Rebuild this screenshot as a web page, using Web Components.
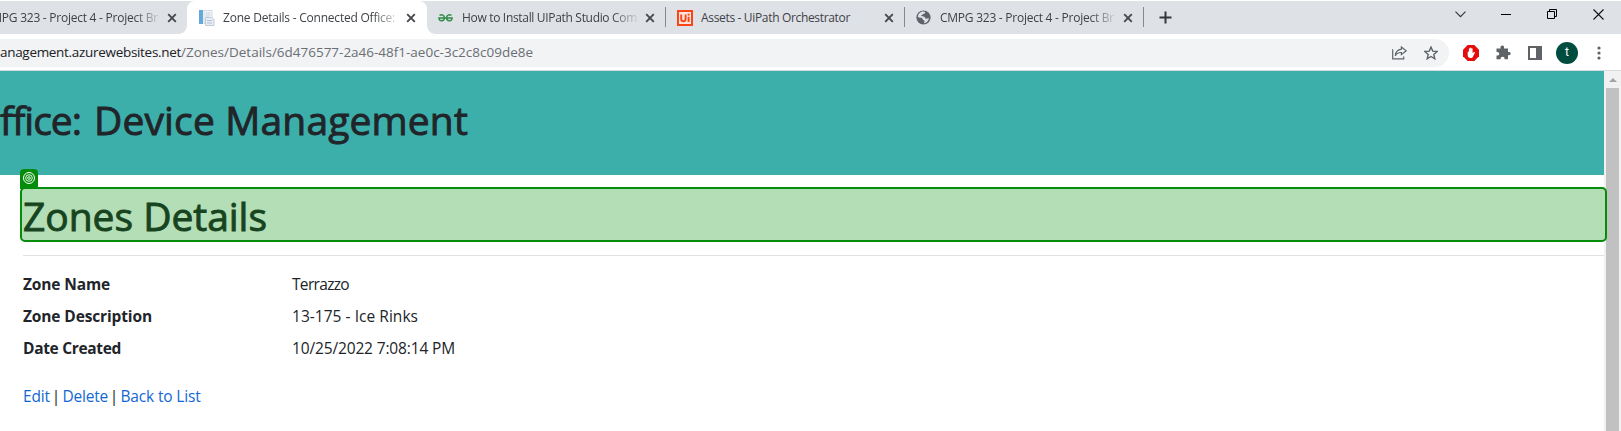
<!DOCTYPE html>
<html lang="en"><head><meta charset="utf-8"><title>Zone Details - Connected Office: Device Management</title>
<style>
body{margin:0;width:1621px;height:431px;overflow:hidden;background:#fff;font-family:"Open Sans","Noto Sans",sans-serif}
</style></head><body>
<browser-window></browser-window>
<script>
const define=(name,html,init)=>customElements.define(name,class extends HTMLElement{
  constructor(){super();this.attachShadow({mode:'open'}).innerHTML=html}
  connectedCallback(){if(init)init(this)}
});

/* Text run whose tracking is adjusted to fill a given width */
define('fit-text',`<style>:host{display:block;white-space:pre;flex:none}span{display:inline-block}</style><span><slot></slot></span>`,el=>{
  const s=el.shadowRoot.querySelector('span'),w=+el.getAttribute('w');
  el.style.width=w+'px';
  const n=el.textContent.length;
  s.style.letterSpacing=((w-s.getBoundingClientRect().width)/n)+'px';
});

define('ui-icon',`<style>:host{display:block;flex:none;line-height:0}svg{display:block}</style><div></div>`,el=>{
  const I={
  close:[10,10,'<path d="M1.2 1.2 8.8 8.8M8.8 1.2 1.2 8.8" stroke="#45484c" stroke-width="1.9"/>'],
  page:[16,16,'<rect x="5" y=".5" width="8" height="13" fill="#f5f8fb" stroke="#d3dae3"/><rect x="0" y="0" width="4" height="14" fill="#62a9dc"/><path d="M6.5 3h5M6.5 5h5M6.5 7h4" stroke="#c3cddb"/><path d="M6.5 7.5h6l2.5 2v6H6.500z" fill="#e9eef5" stroke="#c0cad8"/><path d="M8 10.500h5M8 13h5" stroke="#b4c1d6"/>'],
  geeks:[15,10,'<g fill="none" stroke="#2f8d46" stroke-width="1.5"><path d="M1.500 2.400C4 1.200 6.400 2.100 6.400 4.500M.2 4.900H14.800M6.400 5C6.200 8.500 1.500 8.900 1 5.500M13.500 2.400C11 1.200 8.600 2.100 8.600 4.500M8.600 5C8.800 8.500 13.500 8.900 14 5.500"/></g>'],
  uipath:[16,16,'<rect x="1" y="1" width="14" height="14" fill="#fce3dd" stroke="#fa4616" stroke-width="2"/><path d="M4.200 4.500V9c0 3 4.400 3 4.400 0V4.500M11.600 6.800V12" fill="none" stroke="#fa4616" stroke-width="1.900"/><circle cx="11.600" cy="4.600" r="1.100" fill="#fa4616"/>'],
  globe:[15,15,'<circle cx="7.500" cy="7.500" r="7.100" fill="#5f6368"/><path d="M9.300 1.900c.2 1.700-1 1.800-2.300 2-.5 1.200-1.500 1-2 1.700.3 1.200 2.500.7 3.600 1.300.9.600.5 1.500 1.400 1.900 1.200.1 1.600-.8 2.900-.6-.2 2.600-2.200 4.700-4.800 5-.4-1.200.7-1.500.5-2.300-.2-.8-1.800-.6-2-2C6.300 7.500 3.500 8 1.900 7.300 1.800 4 4.500 1.200 7.800 1.500z" fill="#dee1e6"/><path d="M9.300 1.900c1.600.5 3.300 2.300 3.500 4.300-1.600.8-3-.1-3.800-.8-.8-.6-.3-1.300 0-2z" fill="#5f6368"/>'],
  plus:[13,13,'<path d="M6.500.5v12M.5 6.500h12" stroke="#34373b" stroke-width="2"/>'],
  chevron:[11,7,'<path d="M.5.7 5.500 5.700 10.500.7" fill="none" stroke="#333" stroke-width="1.100"/>'],
  min:[10,1,'<path d="M0 .5h10" stroke="#000"/>'],
  restore:[10,10,'<path d="M.5 2.500h7v7h-7zM2.500 2.500v-2h7v7h-2" fill="none" stroke="#000"/>'],
  exit:[11,11,'<path d="M.5.5 10.500 10.500M10.500.5.500 10.500" stroke="#111" stroke-width="1.100"/>'],
  share:[15,14,'<g fill="none" stroke="#5f6368" stroke-width="1.200"><path d="M.7 3.300v9.600h11V10.500"/><path d="M9.400 1 14.200 4.800 9.400 8.600V6.500C6.500 6.300 4.500 7.400 3.300 9.800 3.600 6.100 5.600 3.700 9.400 3.200z"/></g>'],
  star:[14,14,'<path d="M7 1 8.700 5.100 13.200 5.500 9.800 8.400 10.800 12.800 7 10.500 3.200 12.800 4.200 8.400.8 5.500 5.300 5.100z" fill="none" stroke="#5f6368" stroke-width="1.400"/>'],
  block:[16,16,'<path d="M4.700 0h6.600L16 4.700v6.600L11.300 16H4.700L0 11.300V4.700z" fill="#e40d0d"/><path d="M4.700 7.200c0-.8 1.200-.8 1.200 0V3.900c0-.8 1.200-.8 1.200 0v-.7c0-.8 1.300-.8 1.300 0v.7c0-.8 1.200-.8 1.200 0v4.300l1.300-1.100c.7-.4 1.300.1 1 .7L9.800 11.900c-.5.900-1.200 1.200-2.200 1.200-1.900 0-2.900-1.200-2.900-3z" fill="#fff"/>'],
  puzzle:[15,15,'<path d="M.5 3.500h4.100C4.100 1.700 4.900.5 6.300.5S8.500 1.700 8 3.500h4V7c1.600-.4 2.700.3 2.700 1.600S13.600 10.600 12 10.200v4H8.500c.4-1.700-.6-2.500-1.900-2.500s-2.300.8-1.900 2.500H.5V10.500c1.900.3 2.700-.6 2.700-1.800S2.400 6.700.5 7z" fill="#5f6368"/>'],
  panel:[14,14,'<path d="M0 0h14v14H0zM2 2v10h6V2z" fill="#5f6368" fill-rule="evenodd"/>'],
  dots:[4,14,'<g fill="#5f6368"><circle cx="2" cy="2" r="1.600"/><circle cx="2" cy="7" r="1.600"/><circle cx="2" cy="12" r="1.600"/></g>'],
  up:[8,4,'<path d="M0 4 4 0 8 4z" fill="#a3a3a3"/>'],
  target:[12,12,'<g fill="none" stroke="#fff"><circle cx="6" cy="6" r="5.500"/><circle cx="6" cy="6" r="3.300" stroke-width=".9"/><circle cx="6" cy="6" r="1.300" stroke-width=".9"/></g>']};
  const [w,h,p]=I[el.getAttribute('name')];
  el.shadowRoot.querySelector('div').innerHTML=`<svg width="${w}" height="${h}" viewBox="0 0 ${w} ${h}">${p}</svg>`;
});

define('browser-tab',`<style>
:host{display:flex;box-sizing:border-box;width:239px;height:33px;flex:none;align-items:center;padding-left:12px;position:relative;font-size:12px;color:#3f4246}
:host([active]){background:#fff;border-radius:8px 8px 0 0;width:240px;margin-right:-1px}
:host([active])::before,:host([active])::after{content:"";position:absolute;bottom:0;width:8px;height:8px}
:host([active])::before{left:-8px;background:radial-gradient(circle at 0 0,transparent 7.5px,#fff 8px)}
:host([active])::after{right:-8px;background:radial-gradient(circle at 100% 0,transparent 7.5px,#fff 8px)}
.ico{width:24px;flex:none}
.t{width:176px;overflow:hidden;line-height:20px;height:20px;margin-top:0}
:host([fade]) .t{-webkit-mask-image:linear-gradient(90deg,#000 150px,transparent 178px)}
.c{margin-left:6.500px}
.sep{position:absolute;right:-1px;top:6px;width:1px;height:20px;background:#85888d}
:host(:not([sep])) .sep{display:none}
</style><div class="ico"><slot name="icon"></slot></div><div class="t"><slot></slot></div><ui-icon class="c" name="close"></ui-icon><i class="sep"></i>`);

define('tab-strip',`<style>
:host{display:flex;height:33px;margin-top:1px;background:#dee1e6;justify-content:space-between;border-bottom:1px solid #fff;overflow:hidden}
.tabs{display:flex;margin-left:-52px}
.plus{margin:10px 0 0 16px}
.win{display:flex;height:26px;align-items:center;margin-right:17px}
.win div{width:46px;display:flex;justify-content:center}.win div:last-child{width:12px;margin-left:17px}
</style>
<div class="tabs">
<browser-tab fade><fit-text w="174">CMPG 323 - Project 4 - Project Br</fit-text></browser-tab>
<browser-tab fade active><ui-icon slot="icon" name="page"></ui-icon><fit-text w="172">Zone Details - Connected Office:</fit-text></browser-tab>
<browser-tab fade sep><ui-icon slot="icon" name="geeks"></ui-icon><fit-text w="175">How to Install UIPath Studio Com</fit-text></browser-tab>
<browser-tab sep><ui-icon slot="icon" name="uipath"></ui-icon><fit-text w="149">Assets - UiPath Orchestrator</fit-text></browser-tab>
<browser-tab fade sep><ui-icon slot="icon" name="globe"></ui-icon><fit-text w="174">CMPG 323 - Project 4 - Project Br</fit-text></browser-tab>
<ui-icon class="plus" name="plus"></ui-icon></div>
<div class="win"><div><ui-icon name="chevron"></ui-icon></div><div><ui-icon name="min"></ui-icon></div><div><ui-icon name="restore"></ui-icon></div><div><ui-icon name="exit"></ui-icon></div></div>`);

define('tool-bar',`<style>
:host{display:flex;box-sizing:border-box;height:36px;align-items:center;background:#fff;border-bottom:1px solid #d8dadd}
.url{display:flex;box-sizing:border-box;width:1449px;height:28px;background:#f1f3f4;border-radius:0 14px 14px 0;align-items:center;font-size:13.500px;line-height:20px;color:#202124}
.url fit-text{margin-top:-1px}
.p{color:#6b6f74}.sp{flex:1}
.a{display:flex;align-items:center;justify-content:center;width:32px;flex:none}
.av{width:22px;height:22px;border-radius:50%;background:#004d40;color:#fff;font:12px/21px Roboto,sans-serif;text-align:center}
</style>
<div class="url"><fit-text w="181">anagement.azurewebsites.net</fit-text><fit-text class="p" w="352">/Zones/Details/6d476577-2a46-48f1-ae0c-3c2c8c09de8e</fit-text><span class="sp"></span>
<div class="a"><ui-icon name="share"></ui-icon></div><div class="a" style="margin-right:2px"><ui-icon name="star"></ui-icon></div></div>
<div class="a" style="margin-left:6px"><ui-icon name="block"></ui-icon></div><div class="a"><ui-icon name="puzzle"></ui-icon></div><div class="a"><ui-icon name="panel"></ui-icon></div><div class="a"><div class="av">t</div></div><div class="a"><ui-icon name="dots"></ui-icon></div>`);

define('site-banner',`<style>:host{display:flex;height:104px;background:#3cafab;color:#212529;font-size:39px;line-height:56px;-webkit-text-stroke:.9px #212529;box-sizing:border-box;padding-top:21px;overflow:hidden}.d{margin-left:13px}</style><fit-text w="81">ffice:</fit-text><fit-text class="d" w="374">Device Management</fit-text>`);

define('highlight-box',`<style>
:host{display:block;box-sizing:border-box;position:relative;z-index:2;width:1587px;height:55px;margin:12px 0 0 20px;border:2px solid #048c0a;border-radius:5px;background:#b4deb5;color:#174420;font-size:39px;line-height:53px}
.b{position:absolute;left:-2px;top:-20px;width:18px;height:20px;border-radius:4px 4px 0 0;background:#048c0a}
.b ui-icon{margin:3px}.t{margin:0 0 0 1px;font:inherit;-webkit-text-stroke:.9px #174420}
</style><div class="b"><ui-icon name="target"></ui-icon></div><h1 class="t"><slot></slot></h1>`);

define('detail-row',`<style>:host{display:flex;height:32px;font-size:15.500px;line-height:24px}.l{width:269px;font-weight:700}</style><div class="l"><slot name="label"></slot></div><slot></slot>`);

define('zone-page',`<style>
:host{display:block;flex:1;min-width:0;color:#212529}
hr{margin:13px 0 0 23px;border:0;height:1px;background:#e0e1e2}
.rows{margin:16px 0 0 23px}
.links{display:flex;margin:16px 0 0 23px;font-size:15.500px;line-height:24px}
.links span{width:12px;text-align:center;padding-right:.5px}
a{color:#1268d3}
</style>
<site-banner></site-banner>
<highlight-box><fit-text w="244">Zones Details</fit-text></highlight-box>
<hr>
<div class="rows">
<detail-row><fit-text slot="label" w="87">Zone Name</fit-text><fit-text w="57">Terrazzo</fit-text></detail-row>
<detail-row><fit-text slot="label" w="129">Zone Description</fit-text><fit-text w="126">13-175 - Ice Rinks</fit-text></detail-row>
<detail-row><fit-text slot="label" w="98">Date Created</fit-text><fit-text w="163">10/25/2022 7:08:14 PM</fit-text></detail-row>
</div>
<div class="links"><a><fit-text w="27">Edit</fit-text></a><span>|</span><a><fit-text w="45.500">Delete</fit-text></a><span>|</span><a><fit-text w="80">Back to List</fit-text></a></div>`);

define('scroll-bar',`<style>:host{display:flex;flex-direction:column;align-items:center;width:17px;background:#f1f1f1;flex:none}ui-icon{margin:7px 0 6px}.th{width:13px;flex:1;background:#c1c1c1}</style><ui-icon name="up"></ui-icon><div class="th"></div>`);

define('browser-window',`<style>:host{display:flex;flex-direction:column;width:1621px;height:431px;overflow:hidden}.v{display:flex;flex:1;min-height:0}</style><tab-strip></tab-strip><tool-bar></tool-bar><div class="v"><zone-page></zone-page><scroll-bar></scroll-bar></div>`);
</script></body></html>
